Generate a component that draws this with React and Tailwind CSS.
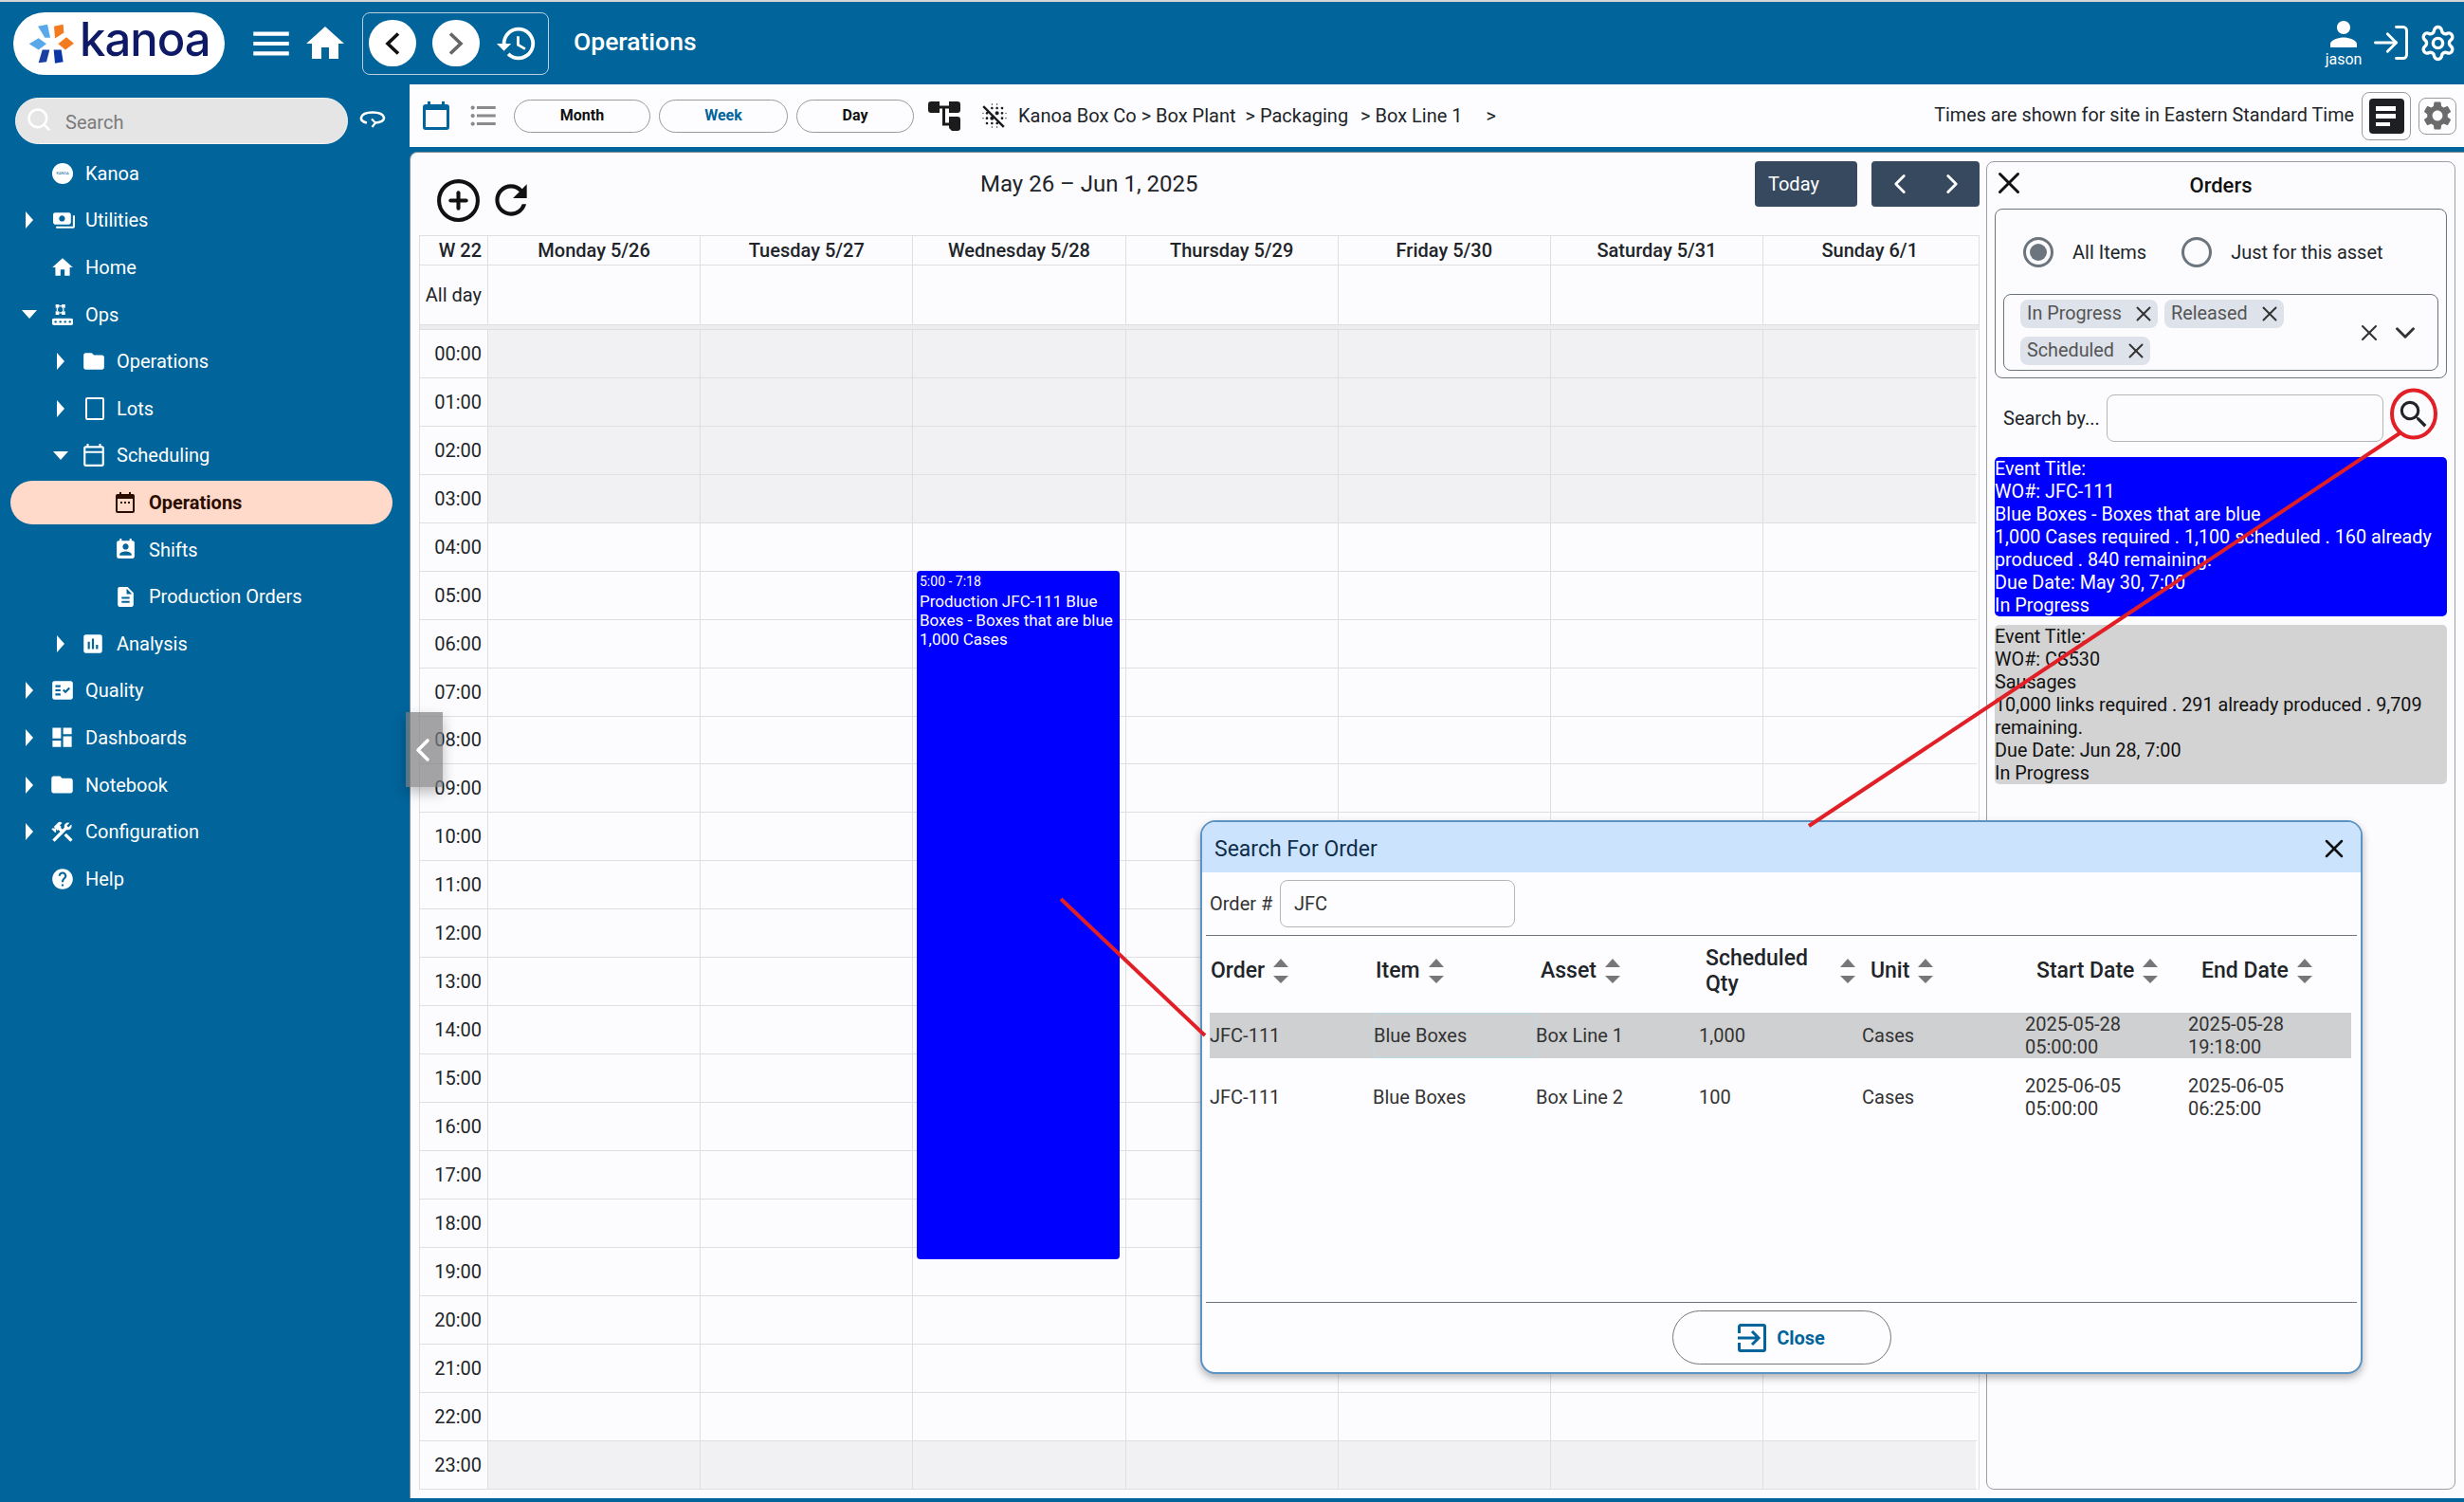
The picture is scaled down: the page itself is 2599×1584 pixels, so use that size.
import React from 'react';
import { ChevronLeft, ChevronRight, ChevronDown, CirclePlus, LogIn, Search, Settings, X } from 'lucide-react';
import {
  MdAssessment, MdBlurOff, MdConstruction, MdDashboard, MdDescription, MdFactCheck, MdFolder,
  MdFormatListBulleted, MdHelp, MdHistory, MdHome, MdMenu, MdOutlineCalendarToday,
  MdPayments, MdPermContactCalendar, MdPerson, MdRefresh, MdSearch, MdSettings,
} from 'react-icons/md';

const Logo = () => (
  <div className="w-[223px] h-[66px] bg-white rounded-full flex items-center pl-[16px] shrink-0">
    <svg viewBox="28 30 144 125" width="48" height="42" className="shrink-0">
      <polygon points="58,38 88,32 97,74 80,74" fill="#58a8ea" />
      <polygon points="109,38 138,32 140,58 112,76" fill="#f47a1f" />
      <polygon points="30,93 60,75 85,93 60,112" fill="#58a8ea" />
      <polygon points="122,93 148,72 172,92 145,112" fill="#f47a1f" />
      <polygon points="72,112 95,112 85,150 60,153" fill="#1b3fa0" />
      <polygon points="108,112 132,112 138,150 112,155" fill="#0a36a8" />
    </svg>
    <span className="ml-[6px] text-[49px] leading-none font-['Inter',sans-serif] font-medium text-[#0e1a66] tracking-[-1px] pb-[8px]">kanoa</span>
  </div>
);

const LassoIcon = () => (
  <svg viewBox="0 0 28 18" width="28" height="18" fill="none" stroke="white" strokeWidth="2.6" className="ml-[12px] mb-[4px]">
    <path d="M8 12.5C3.5 11.5 1.5 9.5 2 7 3 3 8.5 1.5 14 1.5S25 3 26 7c.5 3-3.5 5.5-9.5 5.5" />
    <path d="M13 8.5l4 4-3.5 4.5" strokeWidth="2.2" />
  </svg>
);

const OpsIcon = () => (
  <svg viewBox="0 0 24 26" width="22" height="24" fill="white">
    <rect x="4" y="1" width="4" height="4" />
    <rect x="11" y="1" width="4" height="4" />
    <rect x="4" y="9" width="4" height="4" />
    <rect x="11" y="9" width="4" height="4" />
    <rect x="8" y="2.2" width="3" height="1.4" />
    <rect x="8" y="10" width="3" height="1.4" />
    <rect x="5.2" y="5" width="1.4" height="4" />
    <rect x="12.2" y="5" width="1.4" height="4" />
    <path d="M3 17h18a3.5 3.5 0 0 1 0 8H3a3.5 3.5 0 0 1 0-8z" />
    <g fill="#01649a">
      <circle cx="4" cy="21" r="1.3" />
      <circle cx="9.5" cy="21" r="1.3" />
      <circle cx="15" cy="21" r="1.3" />
      <circle cx="20.5" cy="21" r="1.3" />
    </g>
  </svg>
);

const CalendarDots = () => (
  <svg viewBox="0 0 20 22" width="20" height="22" fill="#2b0d00">
    <path d="M4 0h2v2h8V0h2v2h2a2 2 0 0 1 2 2v16a2 2 0 0 1-2 2H2a2 2 0 0 1-2-2V4a2 2 0 0 1 2-2h2V0zM2 7v13h16V7H2z" />
    <rect x="5" y="10" width="2" height="2" />
    <rect x="9" y="10" width="2" height="2" />
    <rect x="13" y="10" width="2" height="2" />
  </svg>
);

const ToolbarCalendar = () => (
  <svg viewBox="0 0 28 30" width="28" height="30" fill="#01649a" className="shrink-0">
    <path d="M5 0h3v3h12V0h3v3h2a3 3 0 0 1 3 3v21a3 3 0 0 1-3 3H3a3 3 0 0 1-3-3V6a3 3 0 0 1 3-3h2V0zM3 9v18h22V9H3z" />
  </svg>
);

const TreeIcon = () => (
  <svg viewBox="0 0 34 31" width="34" height="31" className="ml-[15px] shrink-0">
    <path d="M3 0h9v12H3a3 3 0 0 1-3-3V3a3 3 0 0 1 3-3zM22 0h9a3 3 0 0 1 3 3v6a3 3 0 0 1-3 3h-9zM22 16h9a3 3 0 0 1 3 3v9a3 3 0 0 1-3 3h-6l-3-3z" fill="#1b1b1b" />
    <path d="M11 6h12M16.5 6v18h6" stroke="#1b1b1b" strokeWidth="3" fill="none" />
  </svg>
);

const BarsIcon = () => (
  <svg viewBox="0 0 37 37" width="37" height="37" className="shrink-0">
    <rect width="37" height="37" rx="4" fill="#1e1f22" />
    <rect x="7" y="8" width="21" height="5" fill="white" />
    <rect x="7" y="16" width="21" height="5" fill="white" />
    <rect x="7" y="25" width="15" height="4" fill="white" />
  </svg>
);

const CloseIcon = () => (
  <svg viewBox="0 0 30 30" width="30" height="30" fill="none" stroke="#01649a" strokeWidth="3" className="shrink-0">
    <path d="M1.5 10V3a1.5 1.5 0 0 1 1.5-1.5h24A1.5 1.5 0 0 1 28.500 3v24a1.500 1.500 0 0 1-1.500 1.500H3A1.500 1.500 0 0 1 1.500 27v-7" />
    <path d="M0 15h21M15 8l7 7-7 7" />
  </svg>
);

const HistoryChevron = ({ flip, color }) => (
  <svg viewBox="0 0 18 24" width="18" height="24" fill="none" stroke={color} strokeWidth="3.6" className={flip ? '-scale-x-100' : ''}>
    <path d="M15 1.500L4 12l11 10.500" />
  </svg>
);

const CaretRight = () => (
  <svg viewBox="0 0 8 18" width="8" height="18" fill="white"><polygon points="0,0 8,9 0,18" /></svg>
);

const CaretDown = () => (
  <svg viewBox="0 0 16 9" width="16" height="9" fill="white" className="-ml-[4px]"><polygon points="0,0 16,0 8,9" /></svg>
);

const KanoaBadge = () => (
  <div className="w-[22px] h-[22px] rounded-full bg-white flex items-center justify-center text-[4px] tracking-tight text-[#01649a]">KANOA</div>
);

const LotsIcon = () => <div className="w-[20px] h-[24px] border-2 border-white rounded-[2px] ml-[2px]" />;

const rowPad = ['pl-[27px]', 'pl-[60px]', 'pl-[94px]'];

const NavRow = ({ level = 0, caret, icon, label }) => (
  <div className={`h-[49.6px] flex items-center text-white text-[20px] ${rowPad[level]}`}>
    <span className="w-[28px] shrink-0 flex items-center">
      {caret === 'right' && <CaretRight />}
      {caret === 'down' && <CaretDown />}
    </span>
    <span className="w-[35px] shrink-0 flex items-center">{icon}</span>
    <span>{label}</span>
  </div>
);

const Sidebar = () => (
  <aside className="w-[432px] shrink-0 pt-[14px]">
    <div className="flex items-center pl-[16px]">
      <div className="w-[351px] h-[49px] bg-[#e5e5e5] rounded-full flex items-center pl-[10px] border border-[#f4f4f4]">
        <Search size={28} color="white" strokeWidth={2.2} className="-mt-[4px]" />
        <span className="ml-[14px] mt-[3px] text-[20px] text-[#7b7b7b]">Search</span>
      </div>
      <LassoIcon />
    </div>
    <nav className="mt-[6px]">
      <NavRow icon={<KanoaBadge />} label="Kanoa" />
      <NavRow caret="right" icon={<MdPayments size={25} color="white" />} label="Utilities" />
      <NavRow icon={<MdHome size={26} color="white" className="-ml-[2px]" />} label="Home" />
      <NavRow caret="down" icon={<OpsIcon />} label="Ops" />
      <NavRow level={1} caret="right" icon={<MdFolder size={26} color="white" className="-ml-[2px]" />} label="Operations" />
      <NavRow level={1} caret="right" icon={<LotsIcon />} label="Lots" />
      <NavRow level={1} caret="down" icon={<MdOutlineCalendarToday size={26} color="white" className="-ml-[2px]" />} label="Scheduling" />
      <div className="h-[49.6px] flex items-center">
        <div className="ml-[11px] w-[403px] h-[46px] bg-[#ffd9c9] rounded-full flex items-center pl-[111px] text-[20px] font-bold text-[#2b0d00]">
          <span className="w-[35px] shrink-0 flex items-center"><CalendarDots /></span>
          <span>Operations</span>
        </div>
      </div>
      <NavRow level={2} icon={<MdPermContactCalendar size={25} color="white" className="-ml-[2px]" />} label="Shifts" />
      <NavRow level={2} icon={<MdDescription size={25} color="white" className="-ml-[2px]" />} label="Production Orders" />
      <NavRow level={1} caret="right" icon={<MdAssessment size={26} color="white" className="-ml-[3px]" />} label="Analysis" />
      <NavRow caret="right" icon={<MdFactCheck size={26} color="white" className="-ml-[2px]" />} label="Quality" />
      <NavRow caret="right" icon={<MdDashboard size={27} color="white" className="-ml-[3px]" />} label="Dashboards" />
      <NavRow caret="right" icon={<MdFolder size={27} color="white" className="-ml-[3px]" />} label="Notebook" />
      <NavRow caret="right" icon={<MdConstruction size={27} color="white" className="-ml-[3px]" />} label="Configuration" />
      <NavRow icon={<MdHelp size={26} color="white" className="-ml-[2px]" />} label="Help" />
    </nav>
  </aside>
);

const Header = () => (
  <header className="h-[87px] flex items-center pl-[14px] pr-[10px] text-white">
    <Logo />
    <MdMenu size={50} className="ml-[24px] shrink-0" />
    <MdHome size={48} className="ml-[8px] shrink-0" />
    <div className="ml-[15px] w-[197px] h-[66px] border border-[#b9cfe0] rounded-[8px] flex items-center pl-[6px] shrink-0">
      <div className="w-[50px] h-[49px] bg-white rounded-full flex items-center justify-center">
        <HistoryChevron color="#111" />
      </div>
      <div className="ml-[17px] w-[50px] h-[49px] bg-white rounded-full flex items-center justify-center">
        <HistoryChevron color="#666" flip />
      </div>
      <MdHistory size={46} className="ml-[16px] shrink-0" />
    </div>
    <span className="ml-[26px] -mt-[4px] text-[26.5px] font-medium">Operations</span>
    <div className="ml-auto flex items-center">
      <div className="flex flex-col items-center -mt-[3px]">
        <MdPerson size={42} className="-mb-[4px]" />
        <span className="text-[16px] leading-[20px]">jason</span>
      </div>
      <LogIn size={44} strokeWidth={1.6} className="ml-[7px] -mt-[2px]" />
      <Settings size={41} strokeWidth={2} className="ml-[7px] mr-[-3px]" />
    </div>
  </header>
);

const ViewButton = ({ label, width, active }) => (
  <button className={`h-[35px] ${width} rounded-full border border-[#9a9a9a] text-[16px] font-bold shrink-0 ${active ? 'text-[#01649a]' : 'text-[#111]'}`}>
    {label}
  </button>
);

const Toolbar = () => (
  <div className="h-[66px] bg-[#fdfdff] flex items-center pl-[14px] pr-[8px] text-[#212529]">
    <ToolbarCalendar />
    <MdFormatListBulleted size={34} color="#8a8a8a" className="ml-[19px] shrink-0" />
    <div className="ml-[15px] flex gap-[9px]">
      <ViewButton label="Month" width="w-[144px]" />
      <ViewButton label="Week" width="w-[136px]" active />
      <ViewButton label="Day" width="w-[124px]" />
    </div>
    <TreeIcon />
    <MdBlurOff size={32} color="#1b1b1b" className="ml-[20px] shrink-0" />
    <div className="ml-[9px] text-[20px] whitespace-pre">Kanoa Box Co &gt; Box Plant  &gt; Packaging  <span className="ml-[3px]">&gt; Box Line 1</span>    <span className="ml-[5px]">&gt;</span></div>
    <div className="ml-auto flex items-center">
      <span className="text-[19.8px]">Times are shown for site in Eastern Standard Time</span>
      <div className="ml-[8px] w-[52px] h-[51px] border border-[#9a9a9a] rounded-[8px] flex items-center justify-center">
        <BarsIcon />
      </div>
      <div className="ml-[8px] w-[40px] h-[39px] border border-[#9a9a9a] rounded-[8px] flex items-center justify-center">
        <MdSettings size={36} color="#6b6b6b" />
      </div>
    </div>
  </div>
);

const days = ['Monday 5/26', 'Tuesday 5/27', 'Wednesday 5/28', 'Thursday 5/29', 'Friday 5/30', 'Saturday 5/31', 'Sunday 6/1'];
const hours = Array.from({ length: 24 }, (_, i) => `${String(i).padStart(2, '0')}:00`);
const shaded = ['00:00', '01:00', '02:00', '03:00', '23:00'];

const Calendar = () => (
  <section className="w-[1646px] ml-[9px] shrink-0">
    <div className="h-[87px] flex items-start">
      <div className="w-[592px] flex items-center pl-[17px] pt-[25px] text-[#111]">
        <CirclePlus size={49} strokeWidth={2} />
        <MdRefresh size={50} className="ml-[6px]" />
      </div>
      <span className="text-[24px] mt-[15px] text-[#212529]">May 26 – Jun 1, 2025</span>
      <div className="ml-auto mt-[9px] flex gap-[15px] text-white">
        <button className="w-[108px] h-[48px] bg-[#36495f] rounded-[4px] text-[20px] text-left pl-[14px]">Today</button>
        <div className="w-[114px] h-[48px] bg-[#36495f] rounded-[4px] flex items-center pl-[13px] gap-[21px]">
          <ChevronLeft size={34} strokeWidth={2} />
          <ChevronRight size={34} strokeWidth={2} />
        </div>
      </div>
    </div>
    <div className="border-l border-t border-r border-[#dfdfe2] text-[20px] text-[#212529] leading-none">
      <div className="grid grid-cols-[72px_repeat(7,224.2px)] h-[31px] border-b border-[#dfdfe2] font-medium">
        <div className="border-r border-[#dfdfe2] flex items-center justify-end pr-[6px]">W 22</div>
        {days.map((d) => (
          <div key={d} className="border-r border-[#dfdfe2] last:border-r-0 flex items-center justify-center">{d}</div>
        ))}
      </div>
      <div className="grid grid-cols-[72px_repeat(7,224.2px)] h-[62px]">
        <div className="border-r border-[#dfdfe2] flex items-center justify-end pr-[6px]">All day</div>
        {days.map((d) => <div key={d} className="border-r border-[#dfdfe2] last:border-r-0" />)}
      </div>
      <div className="h-[6px] bg-[#ececee] border-y border-[#dfdfe2]" />
      <div className="relative mr-[2px]">
        {hours.map((h) => (
          <div key={h} className="grid grid-cols-[72px_repeat(7,224.2px)] h-[50.95px] border-b border-[#dfdfe2]">
            <div className="border-r border-[#dfdfe2] bg-[#fcfcfe] flex items-center justify-end pr-[6px]">{h}</div>
            {days.map((d) => (
              <div key={d} className={`border-r border-[#dfdfe2] last:border-r-0 ${shaded.includes(h) ? 'bg-[#f1f1f3]' : ''}`} />
            ))}
          </div>
        ))}
        <div className="absolute left-[524px] top-[254px] w-[214px] h-[726px] bg-[#0000ff] rounded-[4px] text-white px-[3px] pt-[3px]">
          <div className="text-[14px] leading-[16px]">5:00 - 7:18</div>
          <div className="text-[17px] leading-[20px] mt-[3px]">
            Production JFC-111 Blue Boxes - Boxes that are blue
            <br />
            1,000 Cases
          </div>
        </div>
      </div>
    </div>
  </section>
);

const Chip = ({ label }) => (
  <span className="h-[30px] bg-[#dee2ea] rounded-[8px] flex items-center pl-[7px] text-[19.8px] text-[#555]">
    {label}
    <X size={26} color="#333" strokeWidth={1.8} className="ml-[10px] mr-[2px]" />
  </span>
);

const OrderCard = ({ lines, className }) => (
  <div className={`h-[168px] rounded-[5px] text-[19.8px] leading-[24px] pt-[1px] ${className}`}>
    {lines.map((l) => <div key={l}>{l}</div>)}
  </div>
);

const OrdersPanel = () => (
  <aside className="ml-[7px] mt-[9px] w-[495px] h-[1401px] border border-[#9aa0a6] rounded-[8px] px-[8px] text-[#212529]">
    <div className="relative h-[49px] flex items-center justify-center">
      <X size={38} color="#111" strokeWidth={1.9} className="absolute -left-[4px] top-[3px]" />
      <span className="text-[22px] font-medium text-[#111]">Orders</span>
    </div>
    <div className="h-[179px] border border-[#6c757d] rounded-[8px] px-[8px]">
      <div className="h-[89px] flex items-center text-[20px] pl-[21px]">
        <span className="w-[32px] h-[32px] rounded-full border-[3px] border-[#6c757d] flex items-center justify-center">
          <span className="w-[18px] h-[18px] rounded-full bg-[#6c757d]" />
        </span>
        <span className="ml-[20px]">All Items</span>
        <span className="ml-[37px] w-[32px] h-[32px] rounded-full border-[3px] border-[#6c757d]" />
        <span className="ml-[20px]">Just for this asset</span>
      </div>
      <div className="h-[81px] border border-[#6c757d] rounded-[8px] pl-[17px] py-[4px] flex items-center">
        <div className="w-[345px] flex flex-wrap gap-x-[7px] gap-y-[9px]">
          <Chip label="In Progress" />
          <Chip label="Released" />
          <Chip label="Scheduled" />
        </div>
        <X size={28} color="#333" strokeWidth={1.8} className="ml-[9px]" />
        <ChevronDown size={34} color="#333" strokeWidth={2} className="ml-[7px]" />
      </div>
    </div>
    <div className="mt-[17px] h-[50px] flex items-center pl-[9px] text-[20px]">
      <span className="w-[109px] shrink-0">Search by...</span>
      <div className="w-[292px] h-[50px] border border-[#b5b5b5] rounded-[8px]" />
      <MdSearch size={38} color="#212529" className="ml-[13px] -mt-[8px]" />
    </div>
    <div className="mt-[16px] flex flex-col gap-[9px]">
      <OrderCard
        className="bg-[#0000ff] text-white"
        lines={[
          'Event Title:',
          'WO#: JFC-111',
          'Blue Boxes - Boxes that are blue',
          '1,000 Cases required . 1,100 scheduled . 160 already produced . 840 remaining.',
          'Due Date: May 30, 7:00',
          'In Progress',
        ]}
      />
      <OrderCard
        className="bg-[#d3d3d3] text-[#111]"
        lines={[
          'Event Title:',
          'WO#: CS530',
          'Sausages',
          '10,000 links required . 291 already produced . 9,709 remaining.',
          'Due Date: Jun 28, 7:00',
          'In Progress',
        ]}
      />
    </div>
  </aside>
);

const SortArrows = ({ className = 'ml-[9px]' }) => (
  <svg viewBox="0 0 16 26" width="16" height="26" fill="#777" className={`shrink-0 ${className}`}>
    <polygon points="8,0 16,9 0,9" />
    <polygon points="0,18 16,18 8,26" />
  </svg>
);

const columns = [
  { label: 'Order', cls: 'ml-[1px]' },
  { label: 'Item', cls: 'ml-[3px]' },
  { label: 'Asset', cls: 'ml-[5px]' },
  { label: 'Scheduled Qty', cls: 'ml-[7px]', wide: true },
  { label: 'Unit', cls: 'ml-[9px]' },
  { label: 'Start Date', cls: 'ml-[12px]' },
  { label: 'End Date', cls: 'ml-[14px]' },
];

const rows = [
  ['JFC-111', 'Blue Boxes', 'Box Line 1', '1,000', 'Cases', '2025-05-28 05:00:00', '2025-05-28 19:18:00'],
  ['JFC-111', 'Blue Boxes', 'Box Line 2', '100', 'Cases', '2025-06-05 05:00:00', '2025-06-05 06:25:00'],
];

const SearchDialog = () => (
  <div className="absolute left-[1266px] top-[865px] w-[1226px] h-[584px] flex flex-col bg-[#fdfdff] border-2 border-[#5b94c4] rounded-[16px] shadow-[0_4px_8px_rgba(0,0,0,0.3)] overflow-hidden text-[#333]">
    <div className="h-[53px] shrink-0 bg-[#cce3fd] flex items-center justify-between pl-[13px] pr-[12px]">
      <span className="text-[23px] mt-[5px] text-[#0f2e4a]">Search For Order</span>
      <X size={32} color="#111" strokeWidth={1.9} className="mt-[2px]" />
    </div>
    <div className="h-[66px] shrink-0 flex items-center pl-[8px] text-[20px]">
      <span className="w-[74px]">Order #</span>
      <div className="w-[248px] h-[50px] border border-[#b5b5b5] rounded-[8px] flex items-center pl-[14px]">JFC</div>
    </div>
    <div className="h-px mx-[4px] bg-[#6b7280] shrink-0" />
    <div className="flex-1 pl-[8px]">
      <div className="grid grid-cols-[repeat(7,172px)] h-[81px] pb-[8px] text-[23px] font-medium text-[#212529] leading-[27px]">
        {columns.map((c) => (
          <div key={c.label} className={`flex items-center ${c.cls}`}>
            {c.wide ? <span className="w-[108px]">{c.label}</span> : <span>{c.label}</span>}
            <SortArrows className={c.wide ? 'ml-[34px]' : 'ml-[9px]'} />
          </div>
        ))}
      </div>
      <div className="flex flex-col gap-[17px] w-[1204px] text-[20px] leading-[24px]">
        {rows.map((r, i) => (
          <div key={r[2]} className={`grid grid-cols-[repeat(7,172px)] h-[48px] ${i === 0 ? 'bg-[#cfd0d1]' : ''}`}>
            {r.map((cell, j) => (
              <div key={j} className={`flex items-center pr-[40px] ${i === 0 && j === 1 ? 'border border-[#bcd9e8]' : ''}`}>{cell}</div>
            ))}
          </div>
        ))}
      </div>
    </div>
    <div className="h-px mx-[4px] bg-[#6b7280] shrink-0" />
    <div className="h-[73px] shrink-0 flex items-center justify-center">
      <button className="w-[231px] h-[57px] border border-[#777] rounded-full flex items-center justify-center text-[20px] font-bold text-[#01649a]">
        <CloseIcon />
        <span className="ml-[11px]">Close</span>
      </button>
    </div>
  </div>
);

const Annotations = () => (
  <svg className="absolute inset-0 pointer-events-none" width="2599" height="1584" viewBox="0 0 2599 1584" fill="none" stroke="#e01f26">
    <ellipse cx="2546" cy="436.500" rx="23" ry="25" strokeWidth="4" />
    <line x1="2531" y1="457" x2="1908" y2="871" strokeWidth="4" />
    <line x1="1119" y1="948" x2="1271" y2="1092" strokeWidth="4" />
  </svg>
);

const App = () => (
  <div className="relative w-[2599px] h-[1584px] overflow-hidden bg-[#01649a] font-['Roboto',sans-serif]">
    <div className="h-[2px] bg-[#d5d5d5]" />
    <Header />
    <div className="flex">
      <Sidebar />
      <main className="flex-1 min-w-0">
        <Toolbar />
        <div className="h-[5px]" />
        <div className="h-[1420px] bg-[#fcfcfe] border-t border-l border-[#7a8794] rounded-tl-[8px] flex">
          <Calendar />
          <OrdersPanel />
        </div>
      </main>
    </div>
    <SearchDialog />
    <Annotations />
    <div className="absolute left-[428px] top-[751px] w-[39px] h-[79px] bg-[#7d7d80]/70 shadow-[0_6px_14px_rgba(0,0,0,0.25)] flex items-center">
      <ChevronLeft size={40} color="white" strokeWidth={2.2} className="-ml-[2px]" />
    </div>
  </div>
);

export default App;
